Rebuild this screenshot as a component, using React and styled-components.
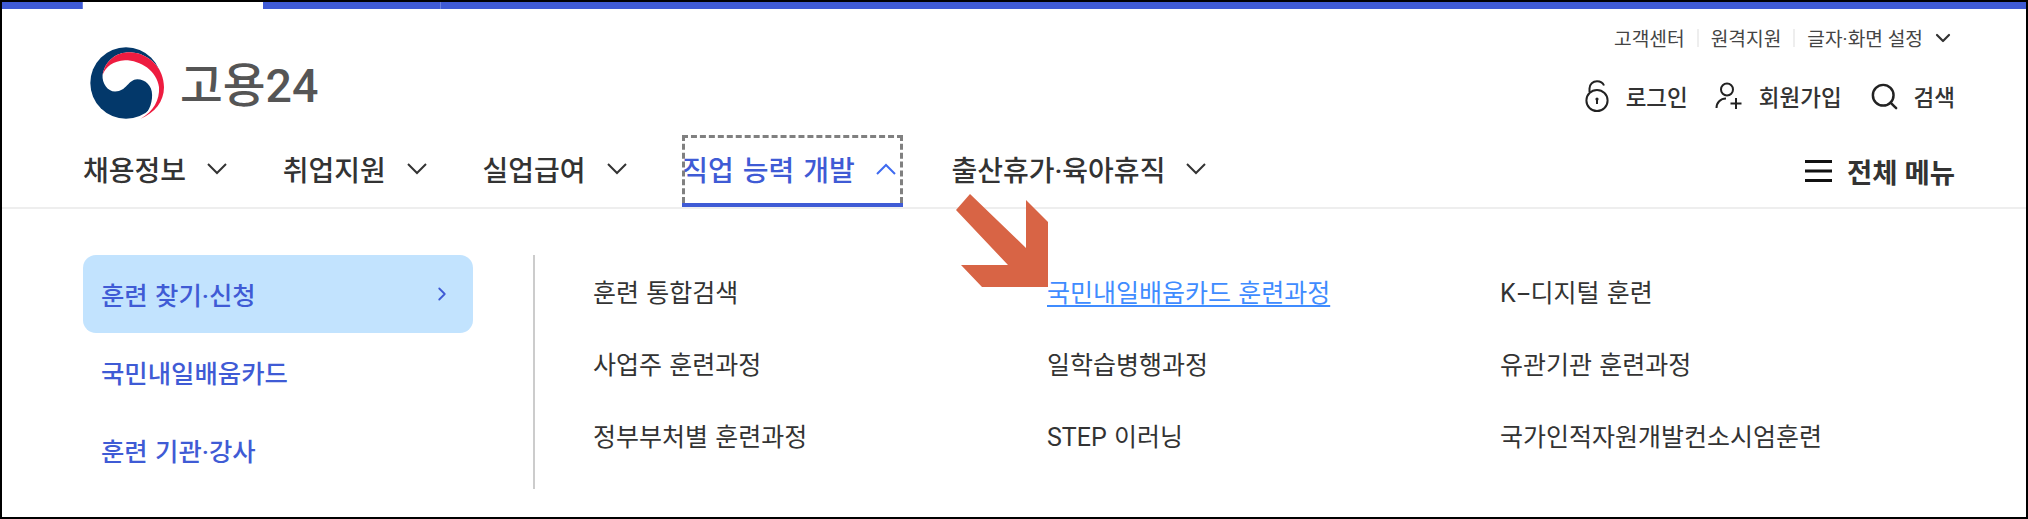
import styled, { createGlobalStyle } from "styled-components";
import { ChevronDown, ChevronRight, Search } from "lucide-react";

const GlobalStyle = createGlobalStyle`
  html, body {
    margin: 0;
    padding: 0;
    background: #fff;
  }
  body {
    font-family: Roboto, "Noto Sans CJK KR", "Noto Sans", sans-serif;
    color: #333;
  }
  * {
    box-sizing: border-box;
  }
`;

const navItems = [
  { label: "채용정보" },
  { label: "취업지원" },
  { label: "실업급여" },
  { label: "직업 능력 개발", active: true },
  { label: "출산휴가·육아휴직" },
];

const sideItems = ["훈련 찾기·신청", "국민내일배움카드", "훈련 기관·강사"];

const links = [
  "훈련 통합검색",
  "국민내일배움카드 훈련과정",
  "K-디지털 훈련",
  "사업주 훈련과정",
  "일학습병행과정",
  "유관기관 훈련과정",
  "정부부처별 훈련과정",
  "STEP 이러닝",
  "국가인적자원개발컨소시엄훈련",
];

const Logo = () => (
  <LogoMark viewBox="269 141 224 216">
    <circle cx="378" cy="249" r="108" fill="#03386a" />
    <path
      d="M307 225C315 180 350 155 392 156C450 160 493 205 493 262C493 305 465 340 422 357C445 340 457 315 457 285C457 258 437 238 412 238C385 238 380 275 345 275C322 275 305 250 307 225Z"
      fill="#fff"
    />
    <path
      d="M307 225C315 180 350 155 392 156C450 160 493 205 493 262C493 305 465 340 422 357C462 335 480 300 478 262C472 212 422 180 375 180C340 182 315 200 307 225Z"
      fill="#ee1c40"
    />
  </LogoMark>
);

const LockIcon = () => (
  <svg width="24" height="33" viewBox="0 0 24 33" fill="none" stroke="#222" strokeWidth="2">
    <circle cx="12" cy="20.5" r="10.6" />
    <path d="M4.5 12V8.5C4.5 4 8 1.2 12 1.2C15.5 1.2 18 3 19 5.5" />
    <circle cx="12" cy="19" r="1.6" fill="#222" stroke="none" />
    <path d="M12 19V24" strokeWidth="2" />
  </svg>
);

const UserPlusIcon = () => (
  <svg width="27" height="28" viewBox="0 0 27 28" fill="none" stroke="#222" strokeWidth="2">
    <circle cx="12" cy="7.5" r="6" />
    <path d="M1.5 26C1.5 20.5 5.5 16.5 11 16.5" />
    <path d="M15.5 21.5H26.5M21 16V27" />
  </svg>
);

const MenuIcon = () => (
  <svg width="27" height="22" viewBox="0 0 27 22" fill="#111">
    <rect y="0" width="27" height="3" />
    <rect y="9.5" width="27" height="3" />
    <rect y="19" width="27" height="3" />
  </svg>
);

const NavChevron = ({ up, color }) => (
  <svg width="20" height="12" viewBox="0 0 20 12" fill="none" stroke={color} strokeWidth="2">
    <path d={up ? "M1 11L10 2L19 11" : "M1 1L10 10L19 1"} />
  </svg>
);

// the hyphen in the reference is much wider than Roboto's
const linkLabel = (link) => {
  if (!link.includes("-")) return link;
  const [head, tail] = link.split("-");
  return (
    <>
      {head}
      <Dash>-</Dash>
      {tail}
    </>
  );
};

const App = () => {
  return (
    <>
      <GlobalStyle />
      <Frame>
        <TopBar>
          <BarPiece $width="81px" />
          <BarGap />
          <BarPiece $width="178px" />
          <BarPiece $grow />
        </TopBar>
        <Header>
          <TopRow>
            <Brand>
              <Logo />
              <BrandName>고용24</BrandName>
            </Brand>
            <TopRight>
              <UtilRow>
                <UtilLink>고객센터</UtilLink>
                <UtilSep />
                <UtilLink>원격지원</UtilLink>
                <UtilSep />
                <UtilLink>글자·화면 설정</UtilLink>
                <ChevronDown size={24} strokeWidth={2.2} color="#333" />
              </UtilRow>
              <ActionRow>
                <ActionButton>
                  <LockIcon />
                  로그인
                </ActionButton>
                <ActionButton>
                  <UserPlusIcon />
                  회원가입
                </ActionButton>
                <ActionButton $gap="14px">
                  <Search size={31} strokeWidth={1.9} color="#222" />
                  검색
                </ActionButton>
              </ActionRow>
            </TopRight>
          </TopRow>
          <NavRow>
            <NavList>
              {navItems.map((item) => (
                <NavItem key={item.label} $active={item.active}>
                  {item.label}
                  <NavChevron up={item.active} color={item.active ? "#3f6bf0" : "#333"} />
                </NavItem>
              ))}
            </NavList>
            <AllMenu>
              <MenuIcon />
              전체 메뉴
            </AllMenu>
          </NavRow>
        </Header>
        <Panel>
          <SideMenu>
            {sideItems.map((item, key) => (
              <SideItem key={item} $selected={key === 0}>
                {item}
                {key === 0 && <ChevronRight size={22} strokeWidth={2} color="#3f5bd5" />}
              </SideItem>
            ))}
          </SideMenu>
          <LinkGrid>
            {links.map((link, key) => (
              <LinkCell key={link} $current={key === 1}>
                {linkLabel(link)}
              </LinkCell>
            ))}
          </LinkGrid>
          <Arrow viewBox="956 194 92 93">
            <polygon
              points="970,194 956,210 1008,265 961,265 982,287 1048,287 1048,222 1026,200 1026,248"
              fill="#d86445"
            />
          </Arrow>
        </Panel>
      </Frame>
    </>
  );
};

const Frame = styled.div`
  position: relative;
  width: 2028px;
  height: 519px;
  border: 2px solid #000;
  background: #fff;
  overflow: hidden;
`;

const TopBar = styled.div`
  display: flex;
  height: 7px;
`;

const BarPiece = styled.div`
  width: ${(props) => props.$width || "auto"};
  flex: ${(props) => (props.$grow ? 1 : "none")};
  background: #3f5bd5;
  border-right: ${(props) => (props.$grow ? "none" : "1px solid #6a80e0")};
`;

const BarGap = styled.div`
  width: 180px;
  background: #fff;
`;

const Header = styled.header`
  padding: 0 71px 0 81px;
  border-bottom: 2px solid #eee;
`;

const TopRow = styled.div`
  display: flex;
  justify-content: space-between;
  height: 126px;
`;

const Brand = styled.div`
  display: flex;
  align-items: center;
  gap: 16px;
  height: 72px;
  margin: 38px 0 0 7px;
`;

const LogoMark = styled.svg`
  width: 74px;
  height: 72px;
`;

const BrandName = styled.span`
  margin-top: -4px;
  font-size: 46.5px;
  font-weight: 500;
  color: #555;
`;

const TopRight = styled.div`
  display: flex;
  flex-direction: column;
  align-items: flex-end;
`;

const UtilRow = styled.div`
  display: flex;
  align-items: center;
  height: 30px;
  margin-top: 14px;
  font-size: 19.2px;
  color: #444;

  svg {
    margin-left: 8px;
  }
`;

const UtilLink = styled.a`
  color: #444;
`;

const UtilSep = styled.span`
  width: 2px;
  height: 18px;
  margin: 0 12px;
  background: #eee;
`;

const ActionRow = styled.div`
  display: flex;
  align-items: center;
  gap: 27px;
  height: 40px;
  margin-top: 23px;
`;

const ActionButton = styled.button`
  display: flex;
  align-items: center;
  gap: ${(props) => props.$gap || "17px"};
  padding: 0;
  border: none;
  background: none;
  font-family: inherit;
  font-size: 22.5px;
  font-weight: 500;
  color: #333;
`;

const NavRow = styled.nav`
  display: flex;
  justify-content: space-between;
  align-items: center;
  height: 72px;
`;

const NavList = styled.div`
  display: flex;
  gap: 48.7px;
  height: 100%;
`;

const NavItem = styled.a`
  position: relative;
  display: flex;
  align-items: center;
  gap: 21px;
  height: 100%;
  padding-right: 7px;
  font-size: 28px;
  font-weight: 500;
  word-spacing: 2px;
  color: ${(props) => (props.$active ? "#3f5bd5" : "#333")};
  border-bottom: 4px solid ${(props) => (props.$active ? "#3f5bd5" : "transparent")};

  &::before {
    content: "";
    display: ${(props) => (props.$active ? "block" : "none")};
    position: absolute;
    inset: 0;
    border: 3px dashed #808080;
    border-bottom: none;
  }
`;

const AllMenu = styled.button`
  display: flex;
  align-items: center;
  gap: 15px;
  padding: 0;
  border: none;
  background: none;
  font-family: inherit;
  font-size: 27.5px;
  font-weight: 700;
  color: #333;
`;

const Panel = styled.section`
  display: flex;
  padding: 46px 71px 0 81px;
`;

const SideMenu = styled.div`
  display: flex;
  flex-direction: column;
  width: 450px;
  padding-right: 60px;
`;

const SideItem = styled.a`
  display: flex;
  justify-content: space-between;
  align-items: center;
  height: 78px;
  padding: 0 20px 0 18px;
  border-radius: 13px;
  background: ${(props) => (props.$selected ? "#c2e3fe" : "transparent")};
  font-size: 25.4px;
  font-weight: 500;
  word-spacing: 1px;
  color: #3f5bd5;
`;

const LinkGrid = styled.div`
  display: grid;
  flex: 1;
  grid-template-columns: 454px 453px 1fr;
  grid-auto-rows: 72px;
  height: 234px;
  padding-left: 58px;
  border-left: 2px solid #ccc;
`;

const LinkCell = styled.a`
  align-self: center;
  justify-self: start;
  font-size: 25px;
  word-spacing: 1px;
  color: ${(props) => (props.$current ? "#3f8cff" : "#333")};
  text-decoration: ${(props) => (props.$current ? "underline" : "none")};
  text-decoration-thickness: 2px;
  text-underline-offset: 3px;
`;

const Dash = styled.span`
  display: inline-block;
  margin: 0 4px;
  transform: scaleX(1.9);
`;

const Arrow = styled.svg`
  position: absolute;
  left: 954px;
  top: 192px;
  width: 92px;
  height: 93px;
`;

export default App;
